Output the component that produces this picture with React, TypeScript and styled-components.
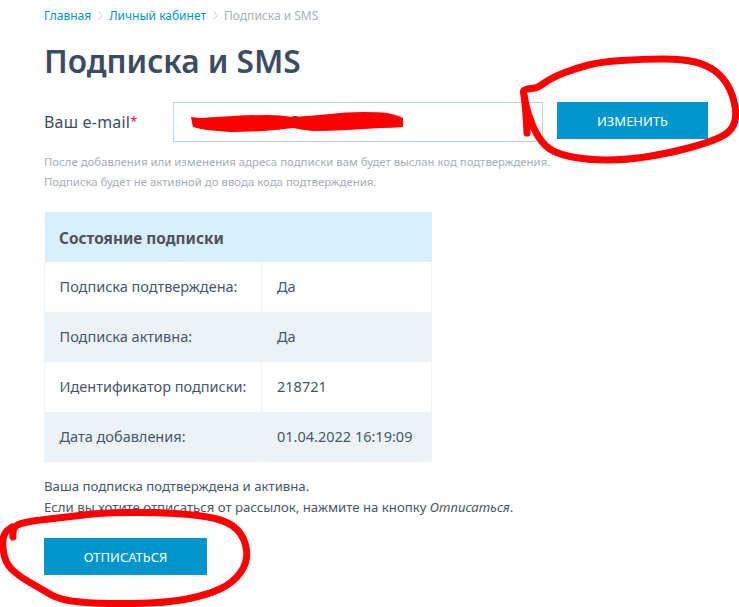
import React from 'react'
import styled, { createGlobalStyle } from 'styled-components'

const GlobalStyle = createGlobalStyle`
  html, body {
    margin: 0;
    padding: 0;
    background: #fff;
    overflow: hidden;
  }
  body {
    font-family: "Noto Sans", "Open Sans", sans-serif;
    color: #3d4b5f;
  }
`

const Page = styled.div`
  position: relative;
  box-sizing: border-box;
  width: 739px;
  height: 607px;
  padding: 7px 0 0 44px;
  overflow: hidden;
`

const Breadcrumbs = styled.nav`
  display: flex;
  align-items: center;
  height: 17px;
  font-size: 12px;
  color: #0095cb;
`

const Crumb = styled.a<{ $current?: boolean }>`
  color: ${props => (props.$current ? '#a9b0b8' : '#0095cb')};
  text-decoration: none;
`

const Separator = styled.svg`
  width: 5px;
  height: 9px;
  margin: 0 6px 0 7px;
  fill: none;
  stroke: #c4c9ce;
  stroke-width: 1;
`

const Title = styled.h1`
  margin: 14px 0 0;
  height: 46px;
  line-height: 46px;
  font-size: 31.6px;
  font-weight: 600;
  color: #3b4c62;
`

const FormRow = styled.div`
  display: flex;
  align-items: flex-start;
  margin-top: 18px;
`

const Label = styled.label`
  width: 129px;
  height: 38px;
  line-height: 38px;
  font-size: 16px;
  letter-spacing: 0.2px;
  color: #3d4b5f;
`

const Required = styled.span`
  color: #e6004c;
  font-size: 13px;
  vertical-align: 2px;
`

const EmailInput = styled.div`
  box-sizing: border-box;
  width: 370px;
  height: 40px;
  padding-left: 114px;
  border: 1px solid #bfd0de;
  background: #fff;
  font-size: 14px;
  line-height: 36px;
  color: #3d4b5f;
`

const Button = styled.button<{ $width: number }>`
  width: ${props => props.$width}px;
  height: 37px;
  padding: 0;
  border: 0;
  background: #0095cb;
  color: #fff;
  font-family: inherit;
  font-size: 13px;
  font-weight: 400;
`

const ChangeButton = styled(Button)`
  margin-left: 14px;
`

const Hints = styled.div`
  margin-top: 10px;
`

const Hint = styled.p`
  margin: 0;
  height: 20px;
  line-height: 20px;
  font-size: 11.4px;
  color: #a7adb5;
`

const StatusTable = styled.table`
  width: 387px;
  margin-top: 20px;
  border-collapse: collapse;
  table-layout: fixed;
  font-size: 14.5px;
`

const HeaderCell = styled.th`
  box-sizing: border-box;
  height: 50px;
  padding: 2px 15px 0 14.5px;
  background: #d8effe;
  color: #4f5358;
  text-align: left;
  font-size: 15.4px;
  font-weight: 700;
`

const Row = styled.tr`
  &:nth-child(even) td {
    background: #edf2f6;
  }
`

const Cell = styled.td`
  box-sizing: border-box;
  height: 50px;
  padding: 0 15px 3px;
  border-left: 1px solid #f0f3f6;
  border-right: 1px solid #f0f3f6;
  color: #47566a;
  white-space: nowrap;

  &:first-child {
    padding-left: 14.5px;
  }
`

const Note = styled.div`
  margin-top: 14px;
  font-size: 13.2px;
  line-height: 21px;
  color: #47566a;
`

const UnsubscribeButton = styled(Button)`
  display: block;
  margin-top: 20px;
`

const Scribble = styled.svg`
  position: absolute;
  top: 0;
  left: 0;
  width: 739px;
  height: 607px;
  fill: none;
  stroke: #ff0000;
  stroke-width: 7;
  stroke-linecap: round;
  stroke-linejoin: round;
  pointer-events: none;
`

const Redaction = styled.path`
  fill: #ff0000;
  stroke: none;
`

const rows = [
  { label: 'Подписка подтверждена:', value: 'Да' },
  { label: 'Подписка активна:', value: 'Да' },
  { label: 'Идентификатор подписки:', value: '218721' },
  { label: 'Дата добавления:', value: '01.04.2022 16:19:09' },
]

// traced by hand from the marker strokes on the screenshot
const changeRing: number[][] = [
  [527, 133], [526, 112], [524, 95], [523, 90], [533, 88], [537, 88], [553, 77], [577, 68],
  [600, 62], [643, 59], [683, 59], [707, 65], [723, 77], [733, 95], [737, 117], [730, 133],
  [707, 143], [670, 153], [627, 160], [587, 160], [553, 153], [538, 138], [528, 115], [524, 95],
]

const unsubscribeRing: number[][] = [
  [13, 537], [12, 528], [23, 522], [67, 517], [100, 513], [150, 512], [200, 515], [230, 522],
  [245, 538], [248, 562], [233, 583], [207, 595], [167, 603], [100, 604], [60, 600], [43, 590],
  [17, 575], [5, 562], [2, 542], [5, 532], [12, 527],
]

// curve through the midpoints so the stroke doesn't look like a polyline
const smooth = (points: number[][]) => {
  let d = `M${points[0][0]} ${points[0][1]}`
  for (let i = 1; i < points.length - 1; i++) {
    const [x, y] = points[i]
    const [nx, ny] = points[i + 1]
    d += ` Q${x} ${y} ${(x + nx) / 2} ${(y + ny) / 2}`
  }
  const last = points[points.length - 1]
  return `${d} L${last[0]} ${last[1]}`
}

const Chevron = () => (
  <Separator viewBox="0 0 5 9">
    <path d="M0.5 0.5 L4.5 4.5 L0.5 8.5" />
  </Separator>
)

const App = () => (
  <Page>
    <GlobalStyle />
    <Breadcrumbs>
      <Crumb>Главная</Crumb>
      <Chevron />
      <Crumb>Личный кабинет</Crumb>
      <Chevron />
      <Crumb $current>Подписка и SMS</Crumb>
    </Breadcrumbs>
    <Title>Подписка и SMS</Title>
    <FormRow>
      <Label>Ваш e-mail<Required>*</Required></Label>
      <EmailInput>@</EmailInput>
      <ChangeButton $width={151}>ИЗМЕНИТЬ</ChangeButton>
    </FormRow>
    <Hints>
      <Hint>После добавления или изменения адреса подписки вам будет выслан код подтверждения.</Hint>
      <Hint>Подписка будет не активной до ввода кода подтверждения.</Hint>
    </Hints>
    <StatusTable>
      <colgroup>
        <col width="217" />
        <col width="170" />
      </colgroup>
      <thead>
        <tr>
          <HeaderCell colSpan={2}>Состояние подписки</HeaderCell>
        </tr>
      </thead>
      <tbody>
        {rows.map(row => (
          <Row key={row.label}>
            <Cell>{row.label}</Cell>
            <Cell>{row.value}</Cell>
          </Row>
        ))}
      </tbody>
    </StatusTable>
    <Note>
      Ваша подписка подтверждена и активна.
      <br />
      Если вы хотите отписаться от рассылок, нажмите на кнопку <i>Отписаться</i>.
    </Note>
    <UnsubscribeButton $width={163}>ОТПИСАТЬСЯ</UnsubscribeButton>
    <Scribble viewBox="0 0 739 607">
      <Redaction d="M191 117 L200 118 Q215 117 233 116 Q250 115 267 115 Q280 115 293 117 Q310 116 330 114 Q345 112 363 112 Q378 112 387 113 Q397 115 403 118 L403 127 Q392 128 380 128 Q365 129 347 130 Q330 131 313 131 Q302 130 293 128 Q278 130 263 131 Q245 132 230 132 Q218 131 207 130 Q200 129 193 127 Z" />
      <path d={smooth(changeRing)} />
      <path d={smooth(unsubscribeRing)} />
    </Scribble>
  </Page>
)

export default App
